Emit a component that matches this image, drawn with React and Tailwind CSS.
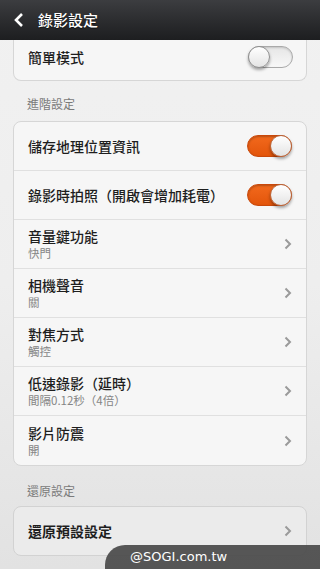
import React from "react";

const font = { fontFamily: '"Noto Sans CJK TC", "Noto Sans", sans-serif' };

function Toggle({ on }) {
  if (on) {
    return (
      <div className="relative w-[45px] h-[22px] rounded-full bg-gradient-to-b from-[#f2691c] to-[#e3550a] border border-[#c9480a] shadow-[inset_0_1px_2px_rgba(0,0,0,0.25)]">
        <div className="absolute right-[-1px] top-[-1px] w-[22px] h-[22px] rounded-full bg-gradient-to-b from-white to-[#e4e4e4] border border-[#b8673e] shadow-[0_2px_3px_rgba(0,0,0,0.35)]" />
      </div>
    );
  }
  return (
    <div className="relative w-[45px] h-[22px] rounded-full bg-gradient-to-b from-[#e6e6e6] to-[#f8f8f8] border border-[#a9a9a9] shadow-[inset_0_1px_2px_rgba(0,0,0,0.15)]">
      <div className="absolute left-[-1px] top-[-1px] w-[22px] h-[22px] rounded-full bg-gradient-to-b from-white to-[#e4e4e4] border border-[#8f8f8f] shadow-[0_2px_3px_rgba(0,0,0,0.35)]" />
    </div>
  );
}

function Chevron() {
  return (
    <svg width="8" height="12" viewBox="0 0 8 12" className="shrink-0">
      <path d="M1.5 1.5 L6 6 L1.5 10.5" fill="none" stroke="#9a9a9a" strokeWidth="2" />
    </svg>
  );
}

function Row({ title, sub, toggle, last }) {
  return (
    <div className={`h-[49px] flex items-center pl-[14px] pr-[14px] ${last ? "" : "border-b border-[#e0e0e0]"}`}>
      <div className="flex-1 flex flex-col justify-center">
        <div className="text-[14px] leading-[18px] font-medium text-[#1e1e1e]">{title}</div>
        {sub && <div className="text-[11.5px] leading-[15px] text-[#858585] mt-[1px]">{sub}</div>}
      </div>
      {toggle !== undefined ? <Toggle on={toggle} /> : <Chevron />}
    </div>
  );
}

export default function App() {
  const rows = [
    { title: "儲存地理位置資訊", toggle: true },
    { title: "錄影時拍照（開啟會增加耗電）", toggle: true },
    { title: "音量鍵功能", sub: "快門" },
    { title: "相機聲音", sub: "關" },
    { title: "對焦方式", sub: "觸控" },
    { title: "低速錄影（延時）", sub: "間隔0.12秒（4倍）" },
    { title: "影片防震", sub: "開" },
  ];

  return (
    <div className="relative w-[320px] h-[569px] overflow-hidden bg-gradient-to-b from-[#f1f1f1] via-[#eeeeee] to-[#e2e2e2]" style={font}>
      <div className="h-[40px] flex items-center bg-gradient-to-b from-[#3c3d40] to-[#1d1e20]">
        <svg width="12" height="16" viewBox="0 0 12 16" className="ml-[13px]">
          <path d="M9 2 L3 8 L9 14" fill="none" stroke="white" strokeWidth="2.6" />
        </svg>
        <div className="ml-[13px] text-[15px] font-medium text-white [text-shadow:0_1px_1px_rgba(0,0,0,0.6)]">錄影設定</div>
      </div>

      <div className="mx-[13px] h-[41px] overflow-hidden rounded-b-[8px] border-x border-b border-[#d6d6d6] bg-[#f6f6f6]">
        <div className="h-[34px] flex items-center pl-[14px] pr-[13px]">
          <div className="flex-1 text-[14px] font-medium text-[#1e1e1e]">簡單模式</div>
          <Toggle on={false} />
        </div>
      </div>

      <div className="pl-[27px] pt-[14px] pb-[8px] text-[12px] leading-[18px] text-[#7a7a7a]">進階設定</div>

      <div className="mx-[13px] rounded-[8px] border border-[#d6d6d6] bg-[#f6f6f6]">
        {rows.map((r, i) => (
          <Row key={r.title} {...r} last={i === rows.length - 1} />
        ))}
      </div>

      <div className="pl-[27px] pt-[16px] pb-[6px] text-[12px] leading-[18px] text-[#7a7a7a]">還原設定</div>

      <div className="mx-[13px] rounded-[8px] border border-[#d2d2d2] bg-[#ebebeb]">
        <div className="h-[48px] flex items-center pl-[14px] pr-[14px]">
          <div className="flex-1 text-[14px] font-bold text-[#1e1e1e]">還原預設設定</div>
          <Chevron />
        </div>
      </div>

      <div className="absolute left-[105px] top-[545px] w-[215px] h-[24px] rounded-tl-[20px] bg-[rgba(70,70,70,0.9)] flex items-center">
        <span className="ml-[25px] text-[13px] text-white" style={{ fontFamily: '"DejaVu Sans", sans-serif' }}>@SOGI.com.tw</span>
      </div>
    </div>
  );
}
